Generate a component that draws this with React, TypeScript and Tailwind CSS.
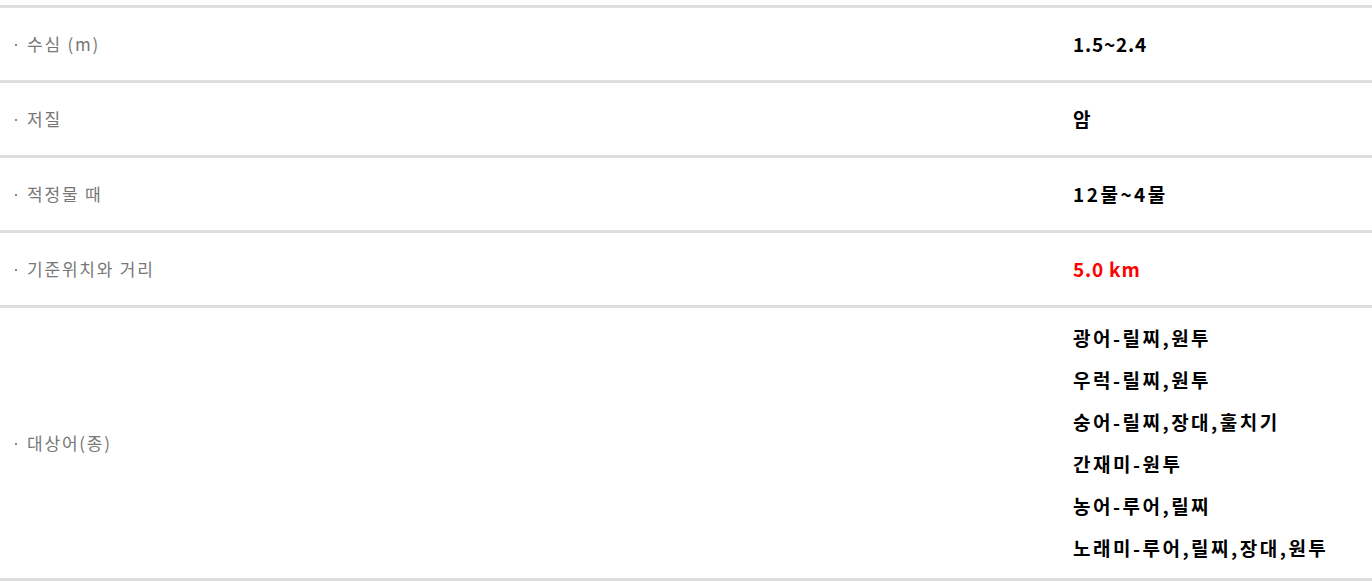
import React from 'react';

type Row = { label: string; values: string[]; red?: boolean; num?: boolean };

const rows: Row[] = [
  { label: '수심 (m)', values: ['1.5~2.4'], num: true },
  { label: '저질', values: ['암'] },
  { label: '적정물 때', values: ['12물~4물'] },
  { label: '기준위치와 거리', values: ['5.0 km'], red: true, num: true },
  {
    label: '대상어(종)',
    values: [
      '광어-릴찌,원투',
      '우럭-릴찌,원투',
      '숭어-릴찌,장대,훌치기',
      '간재미-원투',
      '농어-루어,릴찌',
      '노래미-루어,릴찌,장대,원투',
    ],
  },
];

const App: React.FC = () => {
  return (
    <div className="w-[1372px] h-[582px] overflow-hidden bg-white pt-[5px] font-['Malgun_Gothic','Noto_Sans_CJK_KR',sans-serif]">
      <div className="border-t-[3px] border-[#dedede]">
        {rows.map((row, i) => (
          <div
            key={i}
            className={`flex items-center border-b-[3px] border-[#dedede] ${row.values.length > 1 ? 'py-[9px]' : 'h-[75px]'}`}
          >
            {/* 항목명 */}
            <div className="w-[1058px] pl-[15px] text-[17px] text-[#777] tracking-[1.8px] flex items-center">
              <span className="w-[2px] h-[2px] bg-[#888] mr-[10px] mt-[1px]"></span>
              <span>{row.label}</span>
            </div>
            {/* 값 */}
            <div className="pl-[15px] flex flex-col">
              {row.values.map((v, j) => (
                <p
                  key={j}
                  className={`whitespace-pre font-bold text-[19px] leading-[42px] ${row.num ? 'tracking-[0.8px]' : 'tracking-[2.5px]'} ${row.red ? 'text-[#ff0000]' : 'text-black'}`}
                >
                  {v}
                </p>
              ))}
            </div>
          </div>
        ))}
      </div>
    </div>
  );
};

export default App;
